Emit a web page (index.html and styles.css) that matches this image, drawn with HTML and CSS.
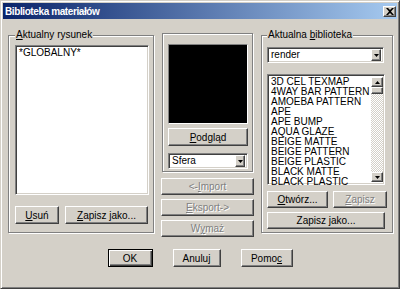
FILE: index.html
```html
<!DOCTYPE html>
<html lang="pl">
<head>
  <meta charset="UTF-8" />
  <title>Biblioteka materiałów</title>
  <link rel="stylesheet" href="styles.css">
</head>
<body>
  <div class="window">
    <div class="titlebar">
      <span class="title">Biblioteka materiałów</span>
      <span class="close-btn">
        <svg width="8" height="7" viewBox="0 0 8 7"><path d="M0 0h2l2 2 2-2h2L5 3.5 8 7H6L4 5 2 7H0l3-3.5z" fill="#000"/></svg>
      </span>
    </div>

    <div class="panels">
      <fieldset class="group group-left">
        <legend><u>A</u>ktualny rysunek</legend>
        <div class="listbox drawing-list">
          <div class="list-item">*GLOBALNY*</div>
        </div>
        <div class="btn-row">
          <button class="btn btn-delete"><span><u>U</u>suń</span></button>
          <button class="btn btn-fill"><span><u>Z</u>apisz jako...</span></button>
        </div>
      </fieldset>

      <div class="middle">
        <div class="preview-group">
          <div class="preview"></div>
          <button class="btn btn-preview"><span><u>P</u>odgląd</span></button>
          <div class="combo">
            <span class="combo-text">Sfera</span>
            <span class="combo-arrow"><svg width="5" height="3" viewBox="0 0 5 3"><path d="M0 0h5L2.5 3z" fill="#000"/></svg></span>
          </div>
        </div>
        <button class="btn btn-wide disabled"><span>&lt;-<u>I</u>mport</span></button>
        <button class="btn btn-wide disabled"><span><u>E</u>ksport-&gt;</span></button>
        <button class="btn btn-wide disabled"><span>W<u>y</u>maż</span></button>
      </div>

      <fieldset class="group group-right">
        <legend>Aktualna <u>b</u>iblioteka</legend>
        <div class="combo combo-lib">
          <span class="combo-text">render</span>
          <span class="combo-arrow"><svg width="5" height="3" viewBox="0 0 5 3"><path d="M0 0h5L2.5 3z" fill="#000"/></svg></span>
        </div>
        <div class="listbox material-list">
          <div class="list-items">
            <div class="list-item">3D CEL TEXMAP</div>
            <div class="list-item">4WAY BAR PATTERN</div>
            <div class="list-item">AMOEBA PATTERN</div>
            <div class="list-item">APE</div>
            <div class="list-item">APE BUMP</div>
            <div class="list-item">AQUA GLAZE</div>
            <div class="list-item">BEIGE MATTE</div>
            <div class="list-item">BEIGE PATTERN</div>
            <div class="list-item">BEIGE PLASTIC</div>
            <div class="list-item">BLACK MATTE</div>
            <div class="list-item">BLACK PLASTIC</div>
          </div>
          <div class="scrollbar">
            <span class="scroll-btn"><svg width="5" height="3" viewBox="0 0 5 3"><path d="M0 3h5L2.5 0z" fill="#000"/></svg></span>
            <span class="scroll-thumb"></span>
            <span class="scroll-track"></span>
            <span class="scroll-btn"><svg width="5" height="3" viewBox="0 0 5 3"><path d="M0 0h5L2.5 3z" fill="#000"/></svg></span>
          </div>
        </div>
        <div class="btn-row">
          <button class="btn btn-open"><span><u>O</u>twórz...</span></button>
          <button class="btn btn-fill disabled"><span><u>Z</u>apisz</span></button>
        </div>
        <button class="btn btn-full"><span>Zapisz <u>j</u>ako...</span></button>
      </fieldset>
    </div>

    <div class="footer">
      <button class="btn btn-ok"><span>OK</span></button>
      <button class="btn btn-cancel"><span>Anuluj</span></button>
      <button class="btn btn-help"><span>Pomo<u>c</u></span></button>
    </div>
  </div>
</body>
</html>
```

FILE: styles.css
```css
* {
  margin: 0;
  padding: 0;
  box-sizing: border-box;
}
body {
  background: #d4d0c8;
  font-family: 'Liberation Sans Narrow', 'Liberation Sans', sans-serif;
  font-size: 10px;
  color: #000;
  overflow: hidden;
}
.window {
  width: 400px;
  height: 289px;
  padding: 2px;
  border: 1px solid;
  border-color: #d4d0c8 #404040 #404040 #d4d0c8;
  box-shadow: inset 1px 1px 0 #fff, inset -1px -1px 0 #808080;
}
.titlebar {
  height: 16px;
  display: flex;
  align-items: center;
  justify-content: space-between;
  padding: 0 1px 0 2px;
  background: linear-gradient(to right, #0a246a, #a6caf0);
}
.title {
  color: #fff;
  font-family: 'Liberation Sans', sans-serif;
  font-weight: bold;
  letter-spacing: -0.4px;
}
.close-btn {
  width: 13px;
  height: 11px;
  display: flex;
  align-items: center;
  justify-content: center;
  background: #d4d0c8;
  border: 1px solid;
  border-color: #fff #404040 #404040 #fff;
  box-shadow: inset -1px -1px 0 #808080;
}
u {
  text-decoration: underline;
  text-underline-offset: 1px;
}

/* three columns */
.panels {
  display: flex;
  align-items: flex-start;
  gap: 7px;
  margin-top: 10px;
  padding-left: 5px;
}
.group {
  border: 1px solid #808080;
  box-shadow: 1px 1px 0 #fff, inset 1px 1px 0 #fff;
  min-width: 0;
}
.group legend {
  line-height: 12px;
  padding: 0 1px;
  background: #d4d0c8;
}
.group-left {
  width: 146px;
  padding: 4px 5px 8px 6px;
}
.group-right {
  width: 132px;
  padding: 6px 5px 3px 5px;
}

.listbox {
  background: #fff;
  border: 1px solid;
  border-color: #808080 #fff #fff #808080;
  box-shadow: inset 1px 1px 0 #404040, inset -1px -1px 0 #d4d0c8;
  padding: 2px;
}
.drawing-list {
  width: 134px;
  height: 150px;
}
.list-item {
  line-height: 10px;
  padding-left: 1px;
  white-space: nowrap;
}
.material-list {
  width: 118px;
  height: 111px;
  margin-top: 11px;
  display: flex;
  padding-right: 1px;
}
.list-items {
  flex: 1;
}
.scrollbar {
  width: 12px;
  display: flex;
  flex-direction: column;
}
.scroll-btn,
.scroll-thumb {
  height: 10px;
  display: flex;
  align-items: center;
  justify-content: center;
  background: #d4d0c8;
  border: 1px solid;
  border-color: #fff #404040 #404040 #fff;
  box-shadow: inset -1px -1px 0 #808080;
}
.scroll-thumb {
  height: 7px;
}
.scroll-track {
  flex: 1;
  background: repeating-conic-gradient(#fff 0 25%, #d4d0c8 0 50%) 0 0 / 2px 2px;
}

/* buttons */
.btn {
  display: flex;
  align-items: center;
  justify-content: center;
  height: 18px;
  font: inherit;
  color: #000;
  background: #d4d0c8;
  border: 1px solid;
  border-color: #fff #404040 #404040 #fff;
  box-shadow: inset -1px -1px 0 #808080;
}
.btn span {
  white-space: pre;
}
.btn.disabled {
  color: #808080;
  text-shadow: 1px 1px 0 #fff;
}
.btn-row {
  display: flex;
  gap: 6px;
  margin-top: 11px;
}
.btn-delete {
  width: 44px;
}
.btn-fill {
  flex: 1;
}

/* middle column */
.middle {
  width: 93px;
  margin-top: 4px;
  display: flex;
  flex-direction: column;
  gap: 4px;
}
.preview-group {
  margin: 0 1px 2px;
  padding: 10px 4px 2px 5px;
  border: 1px solid #808080;
  box-shadow: 1px 1px 0 #fff, inset 1px 1px 0 #fff;
}
.preview {
  width: 80px;
  height: 80px;
  background: #000;
  border: 1px solid;
  border-color: #808080 #fff #fff #808080;
}
.btn-preview {
  width: 80px;
  margin-top: 4px;
}
.combo {
  height: 16px;
  margin-top: 7px;
  display: flex;
  align-items: center;
  justify-content: space-between;
  background: #fff;
  border: 1px solid;
  border-color: #808080 #fff #fff #808080;
  box-shadow: inset 1px 1px 0 #404040, inset -1px -1px 0 #d4d0c8;
  padding: 2px;
}
.combo-text {
  padding-left: 1px;
  line-height: 10px;
}
.combo-arrow {
  width: 10px;
  height: 12px;
  display: flex;
  align-items: center;
  justify-content: center;
  background: #d4d0c8;
  border: 1px solid;
  border-color: #fff #404040 #404040 #fff;
  box-shadow: inset -1px -1px 0 #808080;
}
.btn-wide {
  height: 17px;
}
.combo-lib {
  width: 117px;
  margin-top: 0;
}

/* right column */
.group-right .btn-row {
  gap: 5px;
  margin-top: 6px;
}
.btn-open {
  width: 61px;
  height: 17px;
}
.group-right .btn-fill {
  height: 17px;
}
.btn-full {
  width: 118px;
  height: 17px;
  margin-top: 4px;
}

/* dialog buttons */
.footer {
  display: flex;
  justify-content: center;
  gap: 20px;
  margin-top: 12px;
}
.btn-ok {
  width: 45px;
  border: 1px solid #000;
  box-shadow: inset 1px 1px 0 #fff, inset -1px -1px 0 #404040, inset -2px -2px 0 #808080;
}
.btn-cancel {
  width: 48px;
}
.btn-help {
  width: 52px;
}
```
